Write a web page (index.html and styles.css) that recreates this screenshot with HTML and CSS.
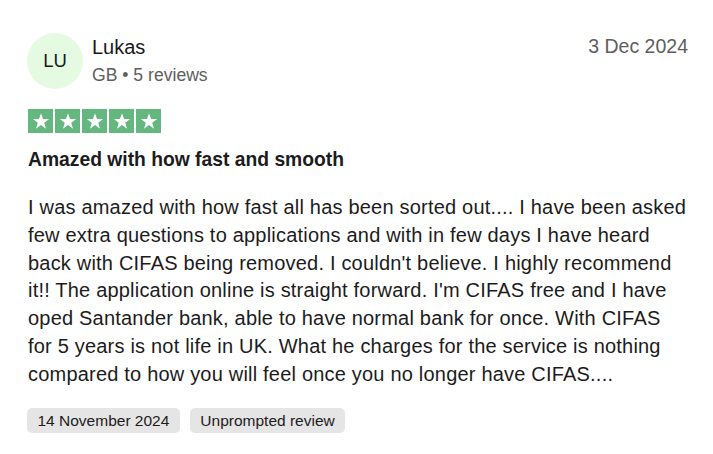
FILE: index.html
```html
<!DOCTYPE html>
<html lang="en">
<head>
<meta charset="utf-8">
<link rel="stylesheet" href="styles.css">
</head>
<body>
<article class="review">
  <header class="head">
    <div class="avatar">LU</div>
    <div class="who">
      <div class="name">Lukas</div>
      <div class="meta">GB • 5 reviews</div>
    </div>
    <time class="date">3 Dec 2024</time>
  </header>
  <div class="stars">
    <span class="star"><svg viewBox="0 0 24 24"><path d="M12 3.5l2.2 6.4h6.7l-5.4 4 2 6.5L12 16.4l-5.5 4 2-6.5-5.4-4h6.7z" fill="#fff"/></svg></span>
    <span class="star"><svg viewBox="0 0 24 24"><path d="M12 3.5l2.2 6.4h6.7l-5.4 4 2 6.5L12 16.4l-5.5 4 2-6.5-5.4-4h6.7z" fill="#fff"/></svg></span>
    <span class="star"><svg viewBox="0 0 24 24"><path d="M12 3.5l2.2 6.4h6.7l-5.4 4 2 6.5L12 16.4l-5.5 4 2-6.5-5.4-4h6.7z" fill="#fff"/></svg></span>
    <span class="star"><svg viewBox="0 0 24 24"><path d="M12 3.5l2.2 6.4h6.7l-5.4 4 2 6.5L12 16.4l-5.5 4 2-6.5-5.4-4h6.7z" fill="#fff"/></svg></span>
    <span class="star"><svg viewBox="0 0 24 24"><path d="M12 3.5l2.2 6.4h6.7l-5.4 4 2 6.5L12 16.4l-5.5 4 2-6.5-5.4-4h6.7z" fill="#fff"/></svg></span>
  </div>
  <h2 class="title">Amazed with how fast and smooth</h2>
  <p class="text">I was amazed with how fast all has been sorted out.... I have been asked few extra questions to applications and with in few days I have heard back with CIFAS being removed. I couldn't believe. I highly recommend it!! The application online is straight forward. I'm CIFAS free and I have oped Santander bank, able to have normal bank for once. With CIFAS for 5 years is not life in UK. What he charges for the service is nothing compared to how you will feel once you no longer have CIFAS....</p>
  <div class="tags">
    <span class="tag">14 November 2024</span>
    <span class="tag">Unprompted review</span>
  </div>
</article>
</body>
</html>
```
FILE: styles.css
```css
html, body {
  margin: 0;
  padding: 0;
  background: #ffffff;
}
body {
  font-family: "Liberation Sans", Arial, sans-serif;
  color: #1c1c1c;
}
.review {
  padding: 33px 25px 0 27px;
}
.head {
  display: flex;
  align-items: flex-start;
}
.avatar {
  width: 56px;
  height: 56px;
  border-radius: 50%;
  background: #e4fbe2;
  display: flex;
  align-items: center;
  justify-content: center;
  font-size: 18.5px;
  color: #191919;
  flex: none;
}
.who {
  margin-left: 9px;
  padding-top: 3px;
  flex: 1;
}
.name {
  font-size: 20px;
  line-height: 22px;
  color: #191919;
}
.meta {
  margin-top: 7px;
  font-size: 17.6px;
  line-height: 20px;
  color: #5e5e5e;
}
.date {
  padding-top: 2px;
  font-size: 19.5px;
  line-height: 22px;
  color: #5e5e5e;
}
.stars {
  display: flex;
  gap: 2px;
  margin-top: 20px;
  padding-left: 1px;
}
.star {
  width: 25px;
  height: 24px;
  background: #65b780;
  display: flex;
  align-items: center;
  justify-content: center;
}
.star svg {
  width: 22px;
  height: 22px;
}
.title {
  margin: 15px 0 0 1px;
  font-size: 19.3px;
  font-weight: 700;
  line-height: 24px;
}
.text {
  margin: 22px 0 0 1px;
  font-size: 20px;
  line-height: 27.8px;
  letter-spacing: 0.2px;
}
.tags {
  display: flex;
  gap: 10px;
  margin-top: 19px;
}
.tag {
  background: #e5e5e5;
  border-radius: 5px;
  padding: 3px 10.5px;
  font-size: 15.5px;
  line-height: 19px;
  color: #1c1c1c;
}
```
